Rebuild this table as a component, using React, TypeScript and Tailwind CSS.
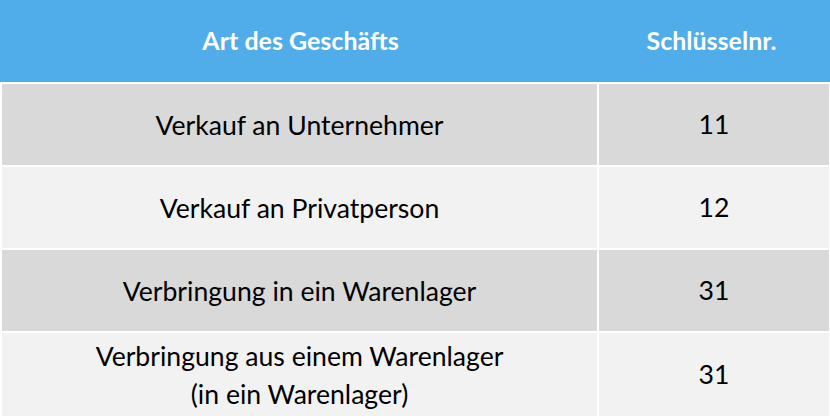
import React from "react";

const rows: { label: string[]; code: string; tone: string; h: string }[] = [
  { label: ["Verkauf an Unternehmer"], code: "11", tone: "bg-[#d9d9d9]", h: "h-[81px]" },
  { label: ["Verkauf an Privatperson"], code: "12", tone: "bg-[#f2f2f2]", h: "h-[81px]" },
  { label: ["Verbringung in ein Warenlager"], code: "31", tone: "bg-[#d9d9d9]", h: "h-[81px]" },
  { label: ["Verbringung aus einem Warenlager", "(in ein Warenlager)"], code: "31", tone: "bg-[#f2f2f2]", h: "h-[83px]" },
];

export default function App() {
  return (
    <div
      className="w-[830px] h-[416px] overflow-hidden bg-white"
      style={{ fontFamily: "Lato, 'Liberation Sans', sans-serif" }}
    >
      <div className="grid grid-cols-[599px_1fr] h-[82px] bg-[#50ade9] text-white font-bold text-[25px] items-center">
        <div className="text-center pl-[2px]">Art des Geschäfts</div>
        <div className="text-center pr-[6px]">Schlüsselnr.</div>
      </div>
      <div className="flex flex-col gap-[2px] pt-[2px] pl-[2px] pr-[1px]">
        {rows.map((r, i) => (
          <div key={i} className={`grid grid-cols-[595px_1fr] gap-[2px] ${r.h}`}>
            <div
              className={`${r.tone} flex flex-col items-center justify-center text-[26.6px] leading-[38px] text-black`}
            >
              {r.label.map((l, j) => (
                <span key={j}>{l}</span>
              ))}
            </div>
            <div className={`${r.tone} flex items-center justify-center text-[26.6px] text-black`}>
              {r.code}
            </div>
          </div>
        ))}
      </div>
    </div>
  );
}
